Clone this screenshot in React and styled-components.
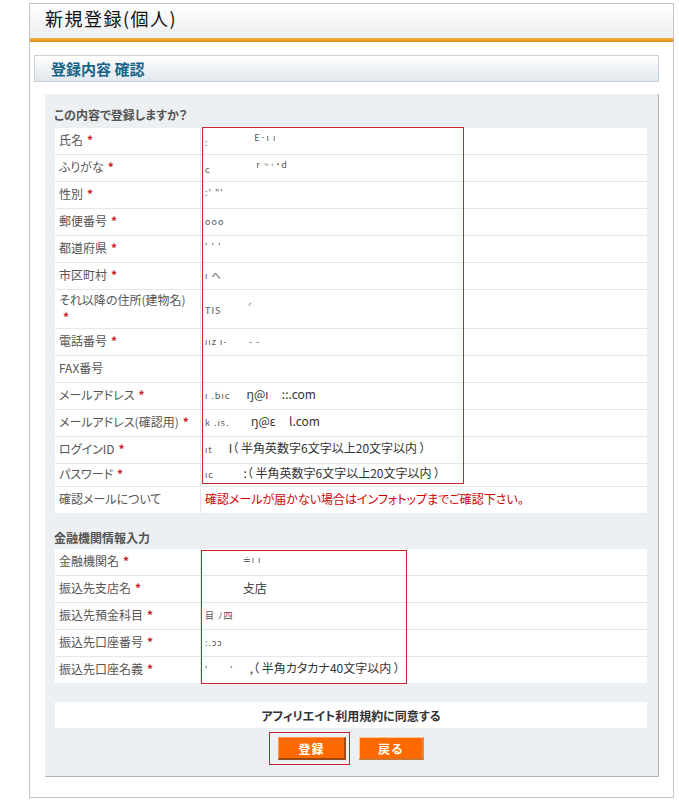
import React from "react";
import styled, { createGlobalStyle } from "styled-components";

const Global = createGlobalStyle`
  html, body { margin: 0; padding: 0; background: #fff; }
  body {
    font-family: "Noto Sans CJK JP", "Noto Sans", sans-serif;
    font-size: 12px;
    color: #333;
    font-feature-settings: "palt";
  }
`;

const Frame = styled.div`
  box-sizing: border-box;
  width: 645px;
  margin: 3px 0 0 29px;
  border: 1px solid #c4c4c4;
  background: #fff;
`;

const Header = styled.div`
  box-sizing: border-box;
  height: 34px;
  padding: 3px 0 0 15px;
  background: linear-gradient(#ffffff, #eceef0);
`;

const Title = styled.h1`
  margin: 0;
  font-size: 18px;
  font-weight: normal;
  line-height: 22px;
  letter-spacing: 1.5px;
  color: #111;
`;

const OrangeBar = styled.div`
  height: 4px;
  background: linear-gradient(#f4b244, #e28b12);
`;

const Body = styled.div`
  padding: 13px 14px 20px 4px;
`;

const SubHeader = styled.div`
  box-sizing: border-box;
  height: 27px;
  border: 1px solid #c9d2da;
  background: linear-gradient(#ffffff, #e0e7ed);
  padding-left: 16px;
  display: flex;
  align-items: center;
  font-size: 15px;
  font-weight: bold;
  color: #17648a;
`;

const MainBox = styled.div`
  margin: 12px 0 0 11px;
  background: #edf0f3;
  border-right: 1px solid #aeb3b8;
  border-bottom: 1px solid #aeb3b8;
  padding: 10px 11px 16px 10px;
  display: flex;
  flex-direction: column;
`;

const SectionTitle = styled.div`
  margin: ${(p) => (p.$second ? "14px" : "0")} 0 0 -1px;
  line-height: 22px;
  height: 22px;
  font-weight: bold;
  color: #555;
`;

const Table = styled.div`
  position: relative;
  margin-top: ${(p) => (p.$first ? "2px" : "0")};
  display: grid;
  grid-template-columns: 145px 1fr;
  gap: 1px;
  background: #e3e7eb;
`;

const Label = styled.div`
  box-sizing: border-box;
  height: ${(p) => (p.$size === "tall" ? 38 : p.$size === "short" ? 22 : 26)}px;
  background: #fff;
  padding: 0 4px 3px;
  display: flex;
  align-items: center;
  color: #555;
  line-height: 17px;
  white-space: nowrap;
`;

const Value = styled.div`
  background: #fff;
  padding: 0 4px 3px;
  display: flex;
  align-items: center;
  color: #333;
  overflow: hidden;
`;

const ValueText = styled.span`
  white-space: pre;
  line-height: 17px;
`;

const Req = styled.span`
  color: #c8202a;
  font-weight: bold;
  margin-left: 4px;
`;

const Frag = styled.span`
  font-size: ${(p) => (p.$tiny ? 9 : 12)}px;
  color: ${(p) => (p.$tiny ? "#555" : "#333")};
  vertical-align: ${(p) => (p.$up ? "super" : "baseline")};
  letter-spacing: ${(p) => (p.$tiny ? "1px" : "0")};
`;

const Warn = styled.span`
  color: #d00000;
  font-size: 12px;
`;

const RedMark = styled.div`
  position: absolute;
  left: ${(p) => p.$l}px;
  top: ${(p) => p.$t}px;
  width: ${(p) => p.$w}px;
  height: ${(p) => p.$h}px;
  box-sizing: border-box;
  border: 1px solid #c4262e;
  pointer-events: none;
`;

const Terms = styled.div`
  margin-top: 19px;
  height: 26px;
  background: #fff;
  display: flex;
  align-items: center;
  justify-content: center;
  font-weight: bold;
  color: #333;
`;

const ButtonRow = styled.div`
  margin-top: 9px;
  display: flex;
  justify-content: center;
  gap: 13px;
`;

const Marked = styled.span`
  position: relative;
  display: inline-flex;
`;

const ButtonMark = styled.span`
  position: absolute;
  inset: -5px -4px -5px -9px;
  border: 1px solid #c4262e;
  pointer-events: none;
`;

const Button = styled.button`
  box-sizing: border-box;
  width: ${(p) => (p.$primary ? 68 : 65)}px;
  height: 23px;
  padding: 0;
  background: #ff6a00;
  color: #fff;
  font-family: inherit;
  font-size: 12px;
  font-weight: bold;
  letter-spacing: 1px;
  border-style: solid;
  border-width: 1px 2px 2px 1px;
  border-color: ${(p) =>
    p.$primary
      ? "#ff9b50 #9a4a14 #9a4a14 #ff9b50"
      : "#ffc58a #e8894a #d2742e #ffc58a"};
  cursor: pointer;
`;

const personal = [
  { l: "氏名", r: true, v: <><Frag $tiny>:</Frag>{"                 "}<Frag $tiny $up>E·ı ı</Frag></> },
  { l: "ふりがな", r: true, v: <><Frag $tiny>c</Frag>{"                 "}<Frag $tiny $up>r ~·˙d</Frag></> },
  { l: "性別", r: true, v: <Frag $tiny $up>:' "'</Frag> },
  { l: "郵便番号", r: true, v: <Frag $tiny>ooo</Frag> },
  { l: "都道府県", r: true, v: <Frag $tiny $up>' ' '</Frag> },
  { l: "市区町村", r: true, v: <Frag $tiny>ı ヘ</Frag> },
  { l: "address", r: true, size: "tall", v: <><Frag $tiny>TIS</Frag>{"          "}<Frag $tiny $up>ᐟ</Frag></> },
  { l: "電話番号", r: true, v: <><Frag $tiny>ıız ı-</Frag>{"        "}<Frag $tiny>- -</Frag></> },
  { l: "FAX番号", r: false, v: null },
  { l: "メールアドレス", r: true, v: <><Frag $tiny>ı .bıc</Frag>{"      "}ŋ@ı{"     "}::.com</> },
  { l: "メールアドレス(確認用)", r: true, v: <><Frag $tiny>k .ıs.</Frag>{"        "}ŋ@ɛ{"     "}l.com</> },
  { l: "ログインID", r: true, v: <><Frag $tiny>ıt</Frag>{"      "}I（ 半角英数字6文字以上20文字以内 ）</> },
  { l: "パスワード", r: true, size: "short", v: <><Frag $tiny>ıc</Frag>{"           "}:（ 半角英数字6文字以上20文字以内 ）</> },
  { l: "確認メールについて", r: false, v: <Warn>確認メールが届かない場合はインフォトップまでご確認下さい。</Warn> },
];

const bank = [
  { l: "金融機関名", v: <>{"              "}<Frag $tiny $up>≐ı ı</Frag></> },
  { l: "振込先支店名", v: <>{"              "}攴店</> },
  { l: "振込先預金科目", v: <Frag $tiny>目 ﾉ四</Frag> },
  { l: "振込先口座番号", v: <Frag $tiny>:.ɔɔ</Frag> },
  { l: "振込先口座名義", v: <><Frag $tiny>'</Frag>{"        "}<Frag $tiny>'</Frag>{"      "},（ 半角カタカナ40文字以内 ）</> },
];

function Row({ label, req, size, children }) {
  return (
    <>
      <Label $size={size}>
        {label === "address" ? (
          <span>
            それ以降の住所(建物名)
            <br />
            {" "}
            <Req>*</Req>
          </span>
        ) : (
          <span>
            {label}
            {req && <Req>*</Req>}
          </span>
        )}
      </Label>
      <Value>
        <ValueText>{children}</ValueText>
      </Value>
    </>
  );
}

export default function App() {
  return (
    <>
      <Global />
      <Frame>
        <Header>
          <Title>新規登録(個人)</Title>
        </Header>
        <OrangeBar />
        <Body>
          <SubHeader>登録内容 確認</SubHeader>
          <MainBox>
            <SectionTitle>この内容で登録しますか？</SectionTitle>
            <Table $first>
              {personal.map((row, i) => (
                <Row key={i} label={row.l} req={row.r} size={row.size}>
                  {row.v}
                </Row>
              ))}
              <RedMark $l={147} $t={-1} $w={262} $h={357} />
            </Table>

            <SectionTitle $second>金融機関情報入力</SectionTitle>
            <Table>
              {bank.map((row, i) => (
                <Row key={i} label={row.l} req>
                  {row.v}
                </Row>
              ))}
              <RedMark $l={146} $t={1} $w={206} $h={134} />
            </Table>

            <Terms>アフィリエイト利用規約に同意する</Terms>
            <ButtonRow>
              <Marked>
                <Button $primary>登録</Button>
                <ButtonMark />
              </Marked>
              <Button>戻る</Button>
            </ButtonRow>
          </MainBox>
        </Body>
      </Frame>
    </>
  );
}
